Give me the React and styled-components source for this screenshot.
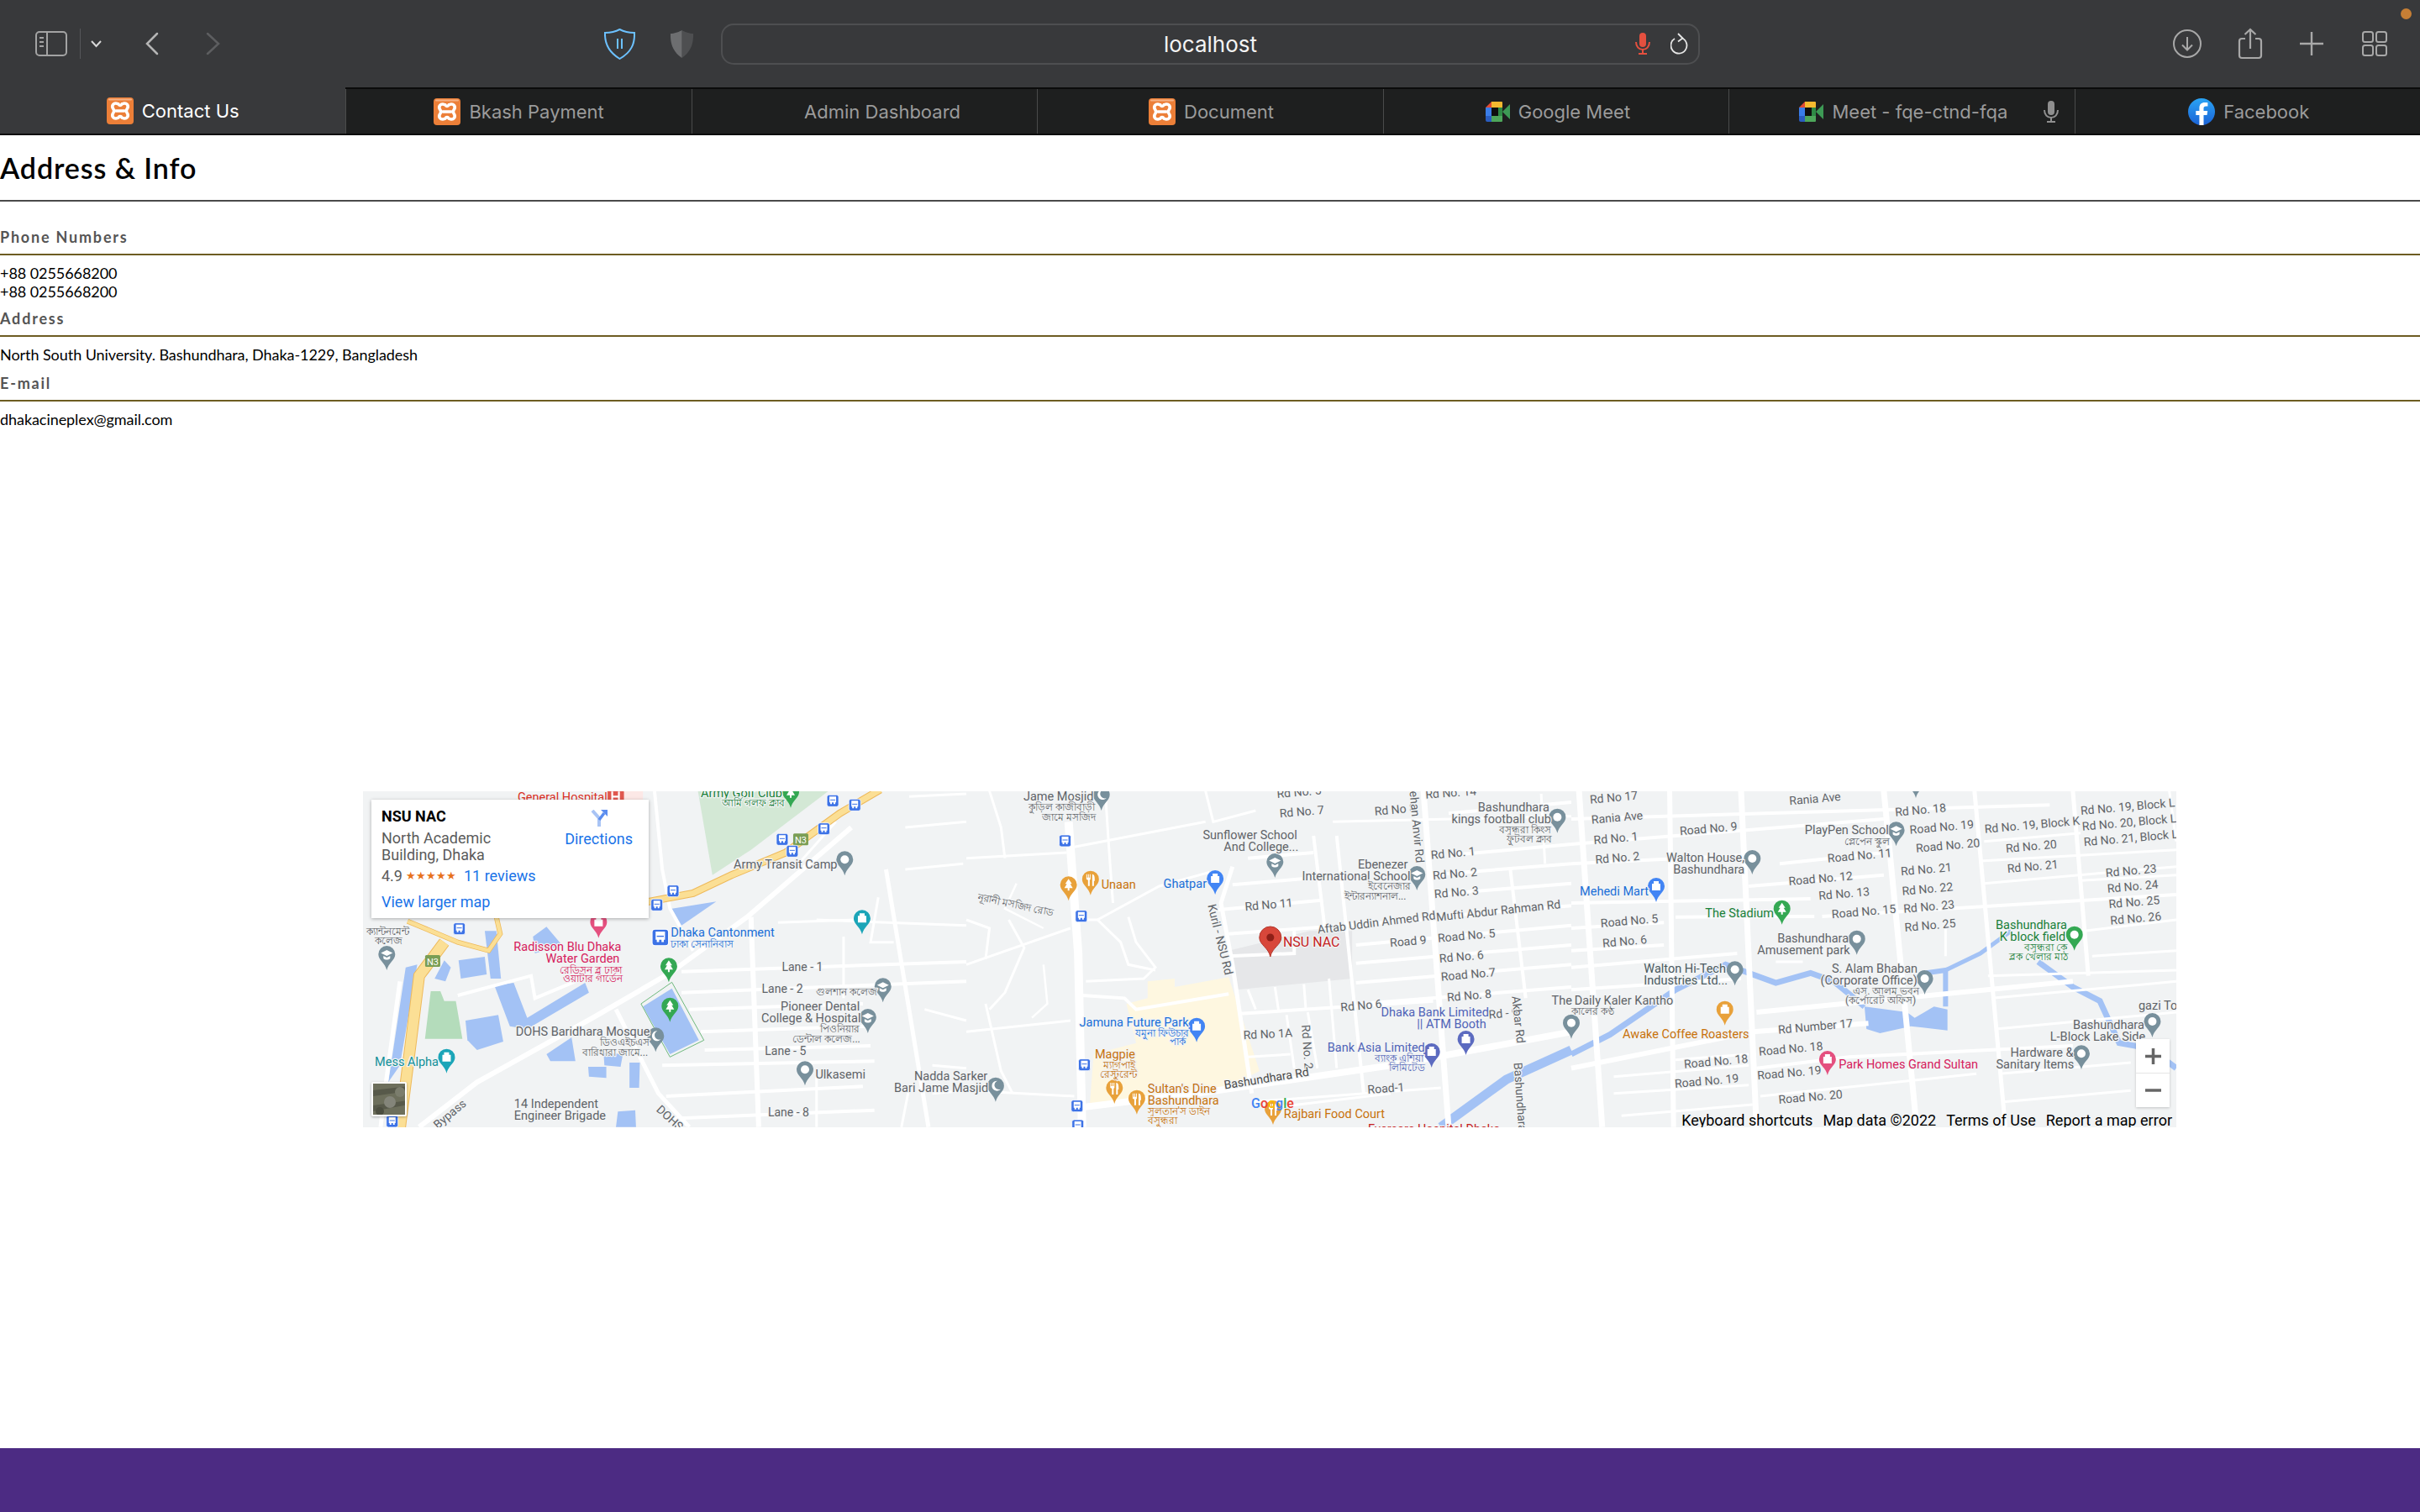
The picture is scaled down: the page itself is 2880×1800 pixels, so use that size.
import styled, { createGlobalStyle } from 'styled-components'

const GlobalStyle = createGlobalStyle`
  html, body { margin: 0; padding: 0; background: #fff; }
  * { box-sizing: border-box; }
`

const Page = styled.div`
  display: flex;
  flex-direction: column;
  height: 1800px;
  overflow: hidden;
  font-family: Lato, "Liberation Sans", sans-serif;
`

/* ---------- browser chrome ---------- */

const Toolbar = styled.div`
  position: relative;
  display: flex;
  align-items: center;
  flex: none;
  height: 104px;
  background: #38393b;
`

const Slot = styled.div`
  display: flex;
  align-items: center;
  flex: none;
  margin-left: ${({ $ml }) => $ml}px;
  width: ${({ $w }) => $w}px;
`

const AddressBar = styled.div`
  display: grid;
  grid-template-columns: 1fr auto 1fr;
  align-items: center;
  flex: none;
  margin-left: 33px;
  width: 1165px;
  height: 49px;
  padding: 0 12px 0 12px;
  border: 2px solid #4e4f51;
  border-radius: 15px;
`

const AddressText = styled.span`
  grid-column: 2;
  font-family: Inter, sans-serif;
  font-size: 26px;
  color: #f4f4f4;
`

const AddressIcons = styled.div`
  grid-column: 3;
  justify-self: end;
  display: flex;
  align-items: center;
  gap: 24px;
`

const RecordDot = styled.span`
  position: absolute;
  top: 10px;
  left: 2857px;
  width: 13px;
  height: 13px;
  border-radius: 50%;
  background: #c77f35;
`

const TabBar = styled.div`
  display: grid;
  grid-template-columns: repeat(7, 1fr);
  flex: none;
  height: 57px;
  background: #1e1f1f;
  border-top: 2px solid #0b0b0b;
  border-bottom: 2px solid #0b0b0b;
`

const Tab = styled.div`
  position: relative;
  display: flex;
  align-items: center;
  justify-content: center;
  gap: 10px;
  padding-left: ${({ $pl }) => $pl || 0}px;
  font-family: Inter, sans-serif;
  font-size: 22px;
  color: ${({ $active }) => ($active ? '#fff' : '#9b9b9b')};
  background: ${({ $active }) => ($active ? '#38393b' : 'transparent')};
  border-left: 1px solid #4a4b4b;
  margin-top: ${({ $active }) => ($active ? '-2px' : '0')};

  &:first-child { border-left: none; }
`

const NoIcon = styled.span`
  width: 32px;
  height: 32px;
`

const TabMic = styled.span`
  position: absolute;
  right: 19px;
  top: 14px;
  display: flex;
`

const Xampp = () => (
  <svg width="32" height="32" viewBox="0 0 32 32">
    <rect width="32" height="32" rx="4" fill="#ec7f38" />
    <rect x="2" y="1.500" width="28" height="2" rx="1" fill="#f5b184" />
    <path d="M14 8C8 5 5 10 8 14c1 1.500 1 2.500 0 4-3 4 0 9 6 6M18 8c6-3 9 2 6 6-1 1.500-1 2.500 0 4 3 4 0 9-6 6M14 8c1 2 3 2 4 0M14 24c1-2 3-2 4 0M11 16h10" fill="none" stroke="#fff" strokeWidth="3.600" strokeLinecap="round" />
  </svg>
)

const MeetIcon = () => (
  <svg width="29" height="24" viewBox="0 0 29 24">
    <path d="M7 0h12a1 1 0 0 1 1 1v6H7z" fill="#f5b92f" />
    <path d="M7 0v7H0z" fill="#df4a33" />
    <path d="M0 7h7v10H0z" fill="#3a7de8" />
    <path d="M0 17h7v7H2a2 2 0 0 1-2-2z" fill="#2a5dc0" />
    <path d="M7 17h13v6a1 1 0 0 1-1 1H7z" fill="#4ea75b" />
    <path d="M15 7h5v10h-5z" fill="#2f8a45" />
    <path d="M20 12l9-9v18z" fill="#3d9a55" />
    <path d="M7 7h8v10H7z" fill="#0f0f0f" />
  </svg>
)

const FacebookIcon = () => (
  <svg width="32" height="32" viewBox="0 0 32 32">
    <defs>
      <linearGradient id="fb" x1="0" y1="0" x2="0" y2="1">
        <stop offset="0" stopColor="#2aa4f4" />
        <stop offset="1" stopColor="#1a62d6" />
      </linearGradient>
    </defs>
    <circle cx="16" cy="16" r="16" fill="url(#fb)" />
    <path d="M18.500 32V20h4l.7-5h-4.700v-3c0-1.500.7-2.600 2.800-2.600h2.100V5.200c-1-.2-2.400-.3-3.800-.3-3.600 0-6.200 2.100-6.200 6.500V15H9.300v5h4.100v12z" fill="#fff" />
  </svg>
)

const MicIcon = ({ color, w = 18, h = 26 }) => (
  <svg width={w} height={h} viewBox="0 0 18 26" fill="none">
    <rect x="5" y="0" width="8" height="17" rx="4" fill={color} />
    <path d="M1 11c0 5.500 3.500 9 8 9s8-3.500 8-9M9 20v5M4 25h10" stroke={color} strokeWidth="2" />
  </svg>
)

const tabs = [
  { title: 'Contact Us', icon: <Xampp />, active: true },
  { title: 'Bkash Payment', icon: <Xampp /> },
  { title: 'Admin Dashboard', icon: <NoIcon /> },
  { title: 'Document', icon: <Xampp />, pl: 2 },
  { title: 'Google Meet', icon: <MeetIcon />, pl: 4 },
  { title: 'Meet - fqe-ctnd-fqa', icon: <MeetIcon />, mic: true, pl: 4 },
  { title: 'Facebook', icon: <FacebookIcon />, pl: 3 },
]

/* ---------- address & info ---------- */

const Info = styled.section`
  flex: none;
  color: #000;
`

const Heading = styled.h2`
  margin: 17px 0 0;
  padding-bottom: 16px;
  font-size: 34px;
  line-height: 44px;
  font-weight: 600;
  letter-spacing: 0.900px;
  border-bottom: 2px solid #4a4a4a;
`

const Group = styled.div`
  margin-top: ${({ $mt }) => $mt}px;
`

const GroupTitle = styled.h4`
  margin: 0;
  padding-bottom: 8px;
  font-size: 18px;
  line-height: 24px;
  font-weight: 700;
  letter-spacing: 1.800px;
  color: #555;
  border-bottom: 2px solid #6d5c22;
`

const GroupBody = styled.div`
  margin-top: 10px;
  font-size: 18px;
  line-height: 22px;
  letter-spacing: -0.060px;
`

/* ---------- map ---------- */

const MapFrame = styled.div`
  position: relative;
  flex: none;
  width: 2158px;
  height: 400px;
  margin: 432px 0 0 432px;
  background: #f1f3f4;
  overflow: hidden;
  font-family: Roboto, sans-serif;
`

const MapSvg = styled.svg`
  display: block;
  text {
    font-family: Roboto, "Noto Sans", sans-serif;
    font-size: 14.500px;
    paint-order: stroke;
    stroke: #f1f3f4;
    stroke-width: 2.500px;
    stroke-linejoin: round;
  }
`

const PlaceCard = styled.div`
  position: absolute;
  top: 10px;
  left: 10px;
  display: flex;
  justify-content: space-between;
  width: 330px;
  height: 141px;
  padding: 10px 19px 0 12px;
  background: #fff;
  box-shadow: 0 1px 4px rgba(0, 0, 0, 0.3);
  font-size: 18px;
  line-height: 20px;
  color: #5b5b5b;
`

const PlaceName = styled.div`
  font-weight: 700;
  color: #000;
  margin-bottom: 6px;
`

const PlaceAddress = styled.div`
  width: 170px;
  margin-bottom: 5px;
`

const Rating = styled.div`
  display: flex;
  align-items: center;
  margin-bottom: 11px;
`

const Stars = styled.span`
  margin: 0 9px 0 4px;
  font-size: 13px;
  letter-spacing: 0;
  color: #e7711b;
`

const CardLink = styled.a`
  color: #1a73e8;
`

const DirectionsBox = styled.div`
  display: flex;
  flex-direction: column;
  align-items: center;
  gap: 5px;
  padding-top: 2px;
`

const SatThumb = styled.div`
  position: absolute;
  left: 10px;
  top: 346px;
  width: 42px;
  height: 41px;
  border: 2px solid #fff;
  border-radius: 2px;
  box-shadow: 0 1px 3px rgba(0, 0, 0, 0.3);
  overflow: hidden;
`

const ZoomBox = styled.div`
  position: absolute;
  left: 2110px;
  top: 295px;
  display: flex;
  flex-direction: column;
  width: 40px;
  height: 81px;
  background: #fff;
  box-shadow: 0 1px 3px rgba(0, 0, 0, 0.2);
`

const ZoomButton = styled.div`
  display: flex;
  align-items: center;
  justify-content: center;
  flex: 1;
  & + & { border-top: 1px solid #e6e6e6; }
`

const Attribution = styled.div`
  position: absolute;
  right: 5px;
  bottom: -2px;
  display: flex;
  gap: 12px;
  font-size: 18px;
  line-height: 21px;
  color: #000;
  white-space: nowrap;
`

const GoogleMark = styled.div`
  position: absolute;
  left: 1057px;
  top: 362px;
  font-size: 16px;
  line-height: 20px;
  font-weight: 500;
`

const Letter = styled.span`
  color: ${({ $c }) => $c};
`

const Footer = styled.footer`
  flex: none;
  height: 76px;
  margin-top: auto;
  background: #4c2b83;
`

// the zoomed crops were read at 1568 wide and 3x high, this puts them back in map pixels
const offsets = { 5: -2, 6: 718, 7: 1438 }
const toMap = (p, x, y) => [x / 2.178 + offsets[p], y / 3 - 7]
const pts = (p, list) => list.map(([x, y]) => toMap(p, x, y).join(',')).join(' ')

const grey = '#5f6368'
const blue = '#1a6fd8'
const red = '#d6205c'
const orange = '#c8720a'
const green = '#188038'
const indigo = '#4f63b8'
const teal = '#129099'

const waters = [
  [5, [[805, 440], [920, 415], [830, 500]]],
  [5, [[730, 790], [805, 725], [875, 910], [800, 960]]],
  [5, [[270, 840], [355, 820], [368, 915], [300, 945], [275, 910]]],
  [5, [[252, 625], [320, 612], [325, 675], [258, 690]]],
  [5, [[345, 715], [395, 705], [430, 830], [580, 705], [590, 740], [430, 870], [385, 860]]],
  [5, [[445, 540], [480, 505], [520, 570], [450, 600]]],
  [5, [[190, 690], [215, 625], [232, 650], [218, 700]]],
  [5, [[480, 960], [545, 900], [555, 985], [490, 985]]],
  [5, [[628, 955], [678, 960], [672, 1005], [630, 1000]]],
  [5, [[588, 1005], [635, 1005], [635, 1045], [590, 1040]]],
  [5, [[695, 990], [722, 990], [720, 1080], [695, 1080]]],
  [5, [[665, 1165], [710, 1160], [712, 1220], [660, 1220]]],
  [5, [[115, 650], [145, 640], [100, 1000], [70, 1060]]],
  [5, [[320, 520], [350, 520], [362, 690], [335, 690]]],
  [7, [[760, 790], [870, 810], [890, 830], [940, 790], [975, 800], [975, 875], [880, 860], [800, 885], [765, 870]]],
]

const canals = [
  [6, [[1568, 945], [1400, 1050], [1230, 1220]], 11],
  [7, [[0, 960], [100, 890], [270, 730], [400, 640], [470, 675], [530, 705], [620, 670], [680, 700], [760, 790]], 7],
  [7, [[920, 670], [970, 660], [970, 790]], 6],
  [7, [[970, 660], [1060, 600], [1140, 520]], 5],
  [7, [[1210, 630], [1300, 720], [1370, 770], [1390, 830], [1420, 920], [1500, 940], [1568, 1010]], 7],
]

const roads = [
  [5, [[1270, 150], [1000, 470], [800, 670], [600, 830], [300, 1060], [150, 1220]], 6],
  [5, [[760, 20], [780, 300], [800, 440], [860, 590]], 4],
  [5, [[1010, 470], [1030, 1220]], 6],
  [5, [[1360, 300], [1470, 1220]], 5],
  [5, [[830, 665], [1568, 630]], 4],
  [5, [[830, 740], [1568, 700]], 4],
  [5, [[850, 800], [1300, 780]], 4],
  [5, [[880, 880], [1310, 860]], 4],
  [5, [[890, 945], [1320, 930]], 4],
  [5, [[780, 1000], [1330, 985]], 4],
  [5, [[790, 1110], [1300, 1075]], 4],
  [5, [[800, 1190], [1330, 1160]], 4],
  [5, [[660, 800], [770, 1100], [850, 1220]], 5],
  [5, [[100, 700], [60, 1100], [50, 1220]], 5],
  [5, [[250, 750], [440, 680], [450, 760], [590, 680]], 4],
  [5, [[1180, 480], [1568, 500]], 3],
  [5, [[1120, 300], [1230, 130]], 3],
  [5, [[1410, 150], [1568, 130]], 3],
  [5, [[1420, 40], [1568, 30]], 3],
  [5, [[1410, 300], [1560, 280]], 3],
  [5, [[1460, 800], [1568, 840]], 3],
  [5, [[1340, 400], [1320, 560], [1380, 560]], 3],
  [5, [[1080, 490], [1280, 480]], 3],
  [5, [[1250, 540], [1250, 760]], 3],
  [5, [[1480, 1000], [1568, 1010]], 3],
  [5, [[1480, 1100], [1568, 1090]], 3],
  [5, [[1180, 1040], [1180, 1220]], 3],
  [5, [[1420, 1080], [1400, 1220]], 3],
  [6, [[265, 130], [290, 600], [300, 1220]], 10],
  [6, [[300, 1150], [650, 1090], [1100, 1000], [1568, 880]], 8],
  [6, [[690, 290], [660, 420], [690, 640], [740, 1100]], 5],
  [6, [[900, 180], [930, 520]], 4],
  [6, [[960, 180], [1030, 1100]], 4],
  [6, [[1185, 20], [1250, 1220]], 7],
  [6, [[1410, 300], [1450, 760]], 4],
  [6, [[1490, 30], [1500, 280]], 3],
  [6, [[620, 20], [640, 130], [750, 90]], 3],
  [6, [[280, 220], [620, 130]], 3],
  [6, [[730, 260], [900, 240]], 4],
  [6, [[690, 355], [900, 330]], 4],
  [6, [[650, 445], [920, 410]], 4],
  [6, [[680, 530], [1180, 480]], 4],
  [6, [[680, 610], [850, 600], [850, 520]], 4],
  [6, [[710, 815], [1210, 770]], 4],
  [6, [[730, 970], [840, 960]], 3],
  [6, [[340, 480], [500, 360], [630, 310]], 3],
  [6, [[300, 480], [340, 480], [400, 560], [420, 640], [490, 660]], 3],
  [6, [[0, 640], [270, 510]], 3],
  [6, [[0, 260], [260, 240]], 3],
  [6, [[300, 750], [410, 760], [440, 800], [680, 745]], 4],
  [6, [[0, 1090], [280, 1110]], 3],
  [6, [[740, 1130], [1230, 1080]], 3],
  [6, [[940, 690], [960, 1010]], 3],
  [6, [[800, 1150], [1100, 1100]], 3],
  [6, [[60, 20], [90, 150], [100, 260]], 3],
  [6, [[110, 480], [150, 580], [100, 740], [60, 800]], 3],
  [6, [[0, 480], [60, 510], [50, 620]], 3],
  [6, [[420, 470], [440, 560], [490, 650], [460, 690], [310, 700]], 3],
  [6, [[360, 20], [370, 230], [380, 420]], 3],
  [6, [[130, 350], [100, 440], [200, 510]], 2.500],
  [6, [[0, 880], [270, 840]], 3],
  [6, [[50, 780], [90, 1020], [120, 1100]], 3],
  [6, [[200, 640], [210, 780], [170, 830]], 2.500],
  [6, [[730, 730], [750, 800]], 3],
  [6, [[800, 720], [810, 810]], 3],
  [6, [[875, 710], [880, 800]], 3],
  [6, [[830, 820], [850, 1010]], 3],
  [6, [[885, 810], [910, 1010]], 3],
  [6, [[1250, 250], [1568, 210]], 4],
  [6, [[1200, 320], [1568, 280]], 4],
  [6, [[1210, 390], [1568, 350]], 4],
  [6, [[1210, 470], [1568, 430]], 4],
  [6, [[1010, 570], [1568, 500]], 4],
  [6, [[1010, 635], [1568, 570]], 4],
  [6, [[1010, 705], [1568, 640]], 4],
  [6, [[1020, 780], [1568, 720]], 4],
  [6, [[1250, 100], [1568, 60]], 4],
  [6, [[950, 130], [1568, 110]], 3],
  [7, [[20, 20], [80, 1220]], 7],
  [7, [[255, 20], [265, 1220]], 6],
  [7, [[440, 20], [480, 1220]], 7],
  [7, [[810, 20], [895, 1220]], 7],
  [7, [[1045, 20], [1125, 1220]], 5],
  [7, [[1300, 20], [1340, 680]], 5],
  [7, [[1550, 20], [1568, 200]], 3],
  [7, [[0, 120], [1240, 70]], 4],
  [7, [[0, 210], [810, 120]], 4],
  [7, [[0, 280], [440, 250]], 4],
  [7, [[540, 280], [810, 240]], 4],
  [7, [[460, 360], [810, 320]], 4],
  [7, [[0, 420], [620, 405]], 4],
  [7, [[0, 510], [240, 490]], 4],
  [7, [[270, 470], [630, 468]], 4],
  [7, [[650, 468], [1568, 390]], 4],
  [7, [[0, 590], [240, 570]], 4],
  [7, [[0, 650], [430, 600]], 4],
  [7, [[0, 730], [440, 690]], 4],
  [7, [[480, 810], [1300, 700]], 6],
  [7, [[0, 1010], [470, 880], [770, 850]], 6],
  [7, [[270, 980], [460, 960]], 3],
  [7, [[110, 1040], [460, 1000]], 3],
  [7, [[110, 1100], [460, 1070]], 3],
  [7, [[130, 1180], [470, 1140]], 3],
  [7, [[480, 1010], [720, 970], [1300, 930]], 4],
  [7, [[490, 1110], [1050, 1030]], 3],
  [7, [[1070, 200], [1320, 170]], 3],
  [7, [[1060, 270], [1568, 230]], 3],
  [7, [[1070, 350], [1568, 290]], 3],
  [7, [[1320, 340], [1568, 320]], 3],
  [7, [[1330, 520], [1568, 480]], 3],
  [7, [[1350, 610], [1568, 590]], 3],
  [7, [[1080, 680], [1568, 660]], 3],
  [7, [[1090, 760], [1568, 700]], 3],
  [7, [[1100, 870], [1568, 810]], 3],
  [7, [[1110, 1030], [1450, 990]], 3],
  [7, [[1120, 1130], [1450, 1090]], 3],
  [7, [[970, 510], [970, 610]], 3],
  [7, [[530, 630], [600, 630]], 3],
]

const labels = [
  [5, 'General Hospital', 405, 42, '#d93025'],
  [5, 'Army Golf Club', 880, 27, green],
  [5, 'আর্মি গলফ ক্লাব', 935, 60, green, 12],
  [5, 'Army Transit Camp', 965, 283, grey],
  [5, 'Dhaka Cantonment', 802, 524, blue],
  [5, 'ঢাকা সেনানিবাস', 802, 564, blue, 12],
  [5, 'Radisson Blu Dhaka', 395, 576, red],
  [5, 'Water Garden', 478, 618, red],
  [5, 'রেডিসন ব্লু ঢাকা', 515, 656, red, 12],
  [5, 'ওয়াটার গার্ডেন', 523, 688, red, 12],
  [5, 'ক্যান্টনমেন্ট', 12, 518, grey, 12],
  [5, 'কলেজ', 34, 552, grey, 12],
  [5, 'Lane - 1', 1090, 648, grey, 14],
  [5, 'Lane - 2', 1038, 725, grey, 14],
  [5, 'গুলশান কলেজ', 1178, 735, grey, 12],
  [5, 'Pioneer Dental', 1087, 790, grey],
  [5, 'College & Hospital', 1037, 832, grey],
  [5, 'পিওনিয়ার', 1190, 868, grey, 12],
  [5, 'ডেন্টাল কলেজ...', 1118, 902, grey, 12],
  [5, 'DOHS Baridhara Mosque', 400, 880, grey],
  [5, 'ডিওএইচএস', 618, 915, grey, 12],
  [5, 'বারিধারা জামে...', 572, 950, grey, 12],
  [5, 'Lane - 5', 1046, 948, grey, 14],
  [5, 'Mess Alpha', 35, 988, teal],
  [5, 'Ulkasemi', 1177, 1033, grey],
  [5, 'Nadda Sarker', 1433, 1037, grey],
  [5, 'Bari Jame Masjid', 1381, 1079, grey],
  [5, '14 Independent', 396, 1136, grey],
  [5, 'Engineer Brigade', 396, 1178, grey],
  [5, 'Lane - 8', 1054, 1167, grey, 14],
  [5, 'Dhaka Bypass', 120, 1299, grey, 14, -40],
  [5, 'DOHS Rd', 770, 1150, grey, 14, 42],
  [6, 'Jame Mosjid', 148, 40, grey],
  [6, 'কুড়িল কাজীবাড়ী', 162, 76, grey, 12],
  [6, 'জামে মসজিদ', 195, 110, grey, 12],
  [6, 'Rd No. 5', 805, 30, grey, 14, -5],
  [6, 'Rd No. 7', 812, 100, grey, 14, -5],
  [6, 'Rd No 8', 1058, 92, grey, 14, -5],
  [6, 'Rd No. 14', 1190, 32, grey, 14, -4],
  [6, 'Bashundhara', 1326, 78, grey],
  [6, 'kings football club', 1258, 120, grey],
  [6, 'বসুন্ধরা কিংস', 1380, 156, grey, 12],
  [6, 'ফুটবল ক্লাব', 1400, 190, grey, 12],
  [6, 'Sunflower School', 613, 178, grey],
  [6, 'And College...', 667, 220, grey],
  [6, 'Rd No. 1', 1204, 248, grey, 14, -5],
  [6, 'Ebenezer', 1015, 282, grey],
  [6, 'International School', 870, 323, grey],
  [6, 'ইবেনেজার', 1040, 358, grey, 12],
  [6, 'ইন্টারন্যাশনাল...', 980, 392, grey, 12],
  [6, 'Rd No. 2', 1209, 322, grey, 14, -5],
  [6, 'Rd No. 3', 1213, 388, grey, 14, -5],
  [6, 'Unaan', 350, 353, orange],
  [6, 'Ghatpar', 511, 350, blue],
  [6, 'নূরানী মসজিদ রোড', 30, 395, grey, 12, 12],
  [6, 'Rd No 11', 722, 433, grey, 14, -5],
  [6, 'Mufti Abdur Rahman Rd', 1218, 470, grey, 14, -6],
  [6, 'Aftab Uddin Ahmed Rd', 910, 515, grey, 14, -7],
  [6, 'Road 9', 1098, 562, grey, 14, -5],
  [6, 'Road No. 5', 1222, 545, grey, 14, -5],
  [6, 'Rd No. 6', 1226, 618, grey, 14, -5],
  [6, 'Road No.7', 1230, 683, grey, 14, -5],
  [6, 'Rd No. 8', 1246, 757, grey, 14, -5],
  [6, 'Rd No 6', 970, 792, grey, 14, -5],
  [6, 'Rd - 9', 1354, 818, grey, 14, -5],
  [6, 'Kuril - NSU Rd', 636, 425, grey, 14, 76],
  [6, 'Akbar Rd', 1425, 752, grey, 14, 84],
  [6, 'Rd No. 2', 880, 855, grey, 14, 86],
  [6, 'Bashundhara Rd', 1430, 990, grey, 14, 86],
  [6, 'ehan Anvir Rd', 1160, 20, grey, 14, 85],
  [6, 'Rd No 1A', 718, 892, grey, 14, -3],
  [6, 'NSU NAC', 821, 560, '#c5221f', 16],
  [6, 'Dhaka Bank Limited', 1075, 810, indigo],
  [6, '|| ATM Booth', 1168, 852, indigo],
  [6, 'Bank Asia Limited', 936, 936, indigo],
  [6, 'ব্যাংক এশিয়া', 1058, 972, indigo, 12],
  [6, 'লিমিটেড', 1095, 1005, indigo, 12],
  [6, 'Jamuna Future Park', 293, 846, blue],
  [6, 'যমুনা ফিউচার', 438, 882, blue, 12],
  [6, 'পার্ক', 528, 912, blue, 12],
  [6, 'Magpie', 333, 960, orange],
  [6, 'ম্যাগপাই', 355, 996, orange, 12],
  [6, 'রেস্টুরেন্ট', 347, 1030, orange, 12],
  [6, "Sultan's Dine", 470, 1082, orange],
  [6, 'Bashundhara', 470, 1124, orange],
  [6, 'সুলতান\'স ডাইন', 470, 1160, orange, 12],
  [6, 'বসুন্ধরা', 470, 1194, orange, 12],
  [6, 'Bashundhara Rd', 668, 1070, '#4a4a4a', 14, -9],
  [6, 'Road-1', 1040, 1086, grey, 14, -4],
  [6, 'Rajbari Food Court', 823, 1174, orange],
  [6, 'Evercare Hospital Dhaka', 1041, 1227, '#c5221f'],
  [7, 'Rd No 17', 48, 50, grey, 14, -5],
  [7, 'Rania Ave', 52, 122, grey, 14, -5],
  [7, 'Rania Ave', 565, 55, grey, 14, -5],
  [7, 'Rd No. 1', 58, 195, grey, 14, -5],
  [7, 'Rd No. 2', 62, 265, grey, 14, -5],
  [7, 'Road No. 9', 281, 163, grey, 14, -5],
  [7, 'Rd No. 18', 839, 95, grey, 14, -5],
  [7, 'PlayPen School', 605, 160, grey],
  [7, 'প্লেপেন স্কুল', 708, 198, grey, 12],
  [7, 'Road No. 19', 877, 158, grey, 14, -5],
  [7, 'Rd No. 19, Block K', 1071, 155, grey, 14, -5],
  [7, 'Rd No. 19, Block L', 1320, 90, grey, 14, -5],
  [7, 'Rd No. 20, Block L', 1324, 146, grey, 14, -5],
  [7, 'Rd No. 21, Block L', 1328, 202, grey, 14, -5],
  [7, 'Road No. 20', 893, 224, grey, 14, -5],
  [7, 'Rd No. 20', 1126, 225, grey, 14, -5],
  [7, 'Rd No. 21', 1130, 297, grey, 14, -5],
  [7, 'Walton House,', 246, 258, grey],
  [7, 'Bashundhara', 264, 300, grey],
  [7, 'Road No. 11', 664, 260, grey, 14, -5],
  [7, 'Rd No. 21', 854, 307, grey, 14, -5],
  [7, 'Rd No. 23', 1385, 312, grey, 14, -5],
  [7, 'Rd No. 24', 1389, 368, grey, 14, -5],
  [7, 'Rd No. 25', 1393, 424, grey, 14, -5],
  [7, 'Rd No. 26', 1397, 482, grey, 14, -5],
  [7, 'Road No. 12', 563, 342, grey, 14, -5],
  [7, 'Mehedi Mart', 22, 378, blue],
  [7, 'Rd No. 13', 641, 394, grey, 14, -5],
  [7, 'Rd No. 22', 857, 377, grey, 14, -5],
  [7, 'The Stadium', 347, 457, green],
  [7, 'Road No. 15', 675, 460, grey, 14, -5],
  [7, 'Rd No. 23', 861, 440, grey, 14, -5],
  [7, 'Road No. 5', 76, 492, grey, 14, -5],
  [7, 'Rd No. 25', 864, 507, grey, 14, -5],
  [7, 'Bashundhara', 1100, 497, green],
  [7, 'K block field', 1110, 539, green],
  [7, 'বসুন্ধরা কে', 1175, 576, green, 12],
  [7, 'ব্লক খেলার মাঠ', 1135, 610, green, 12],
  [7, 'Bashundhara', 534, 545, grey],
  [7, 'Amusement park', 482, 587, grey],
  [7, 'Rd No. 6', 81, 563, grey, 14, -5],
  [7, 'Walton Hi-Tech', 188, 653, '#4a5a60'],
  [7, 'Industries Ltd...', 188, 695, '#4a5a60'],
  [7, 'S. Alam Bhaban', 675, 653, grey],
  [7, '(Corporate Office)', 646, 695, grey],
  [7, 'এস. আলম ভবন', 730, 732, grey, 12],
  [7, '(কর্পোরেট অফিস)', 710, 766, grey, 12],
  [7, 'Daily Kaler Kantho', 8, 769, grey],
  [7, 'কালের কণ্ঠ', 0, 805, grey, 12],
  [7, 'gazi To', 1470, 785, grey],
  [7, 'Bashundhara', 1300, 856, grey],
  [7, 'L-Block Lake Side', 1241, 898, grey],
  [7, 'Rd Number 17', 536, 872, grey, 14, -5],
  [7, 'Awake Coffee Roasters', 133, 889, orange],
  [7, 'Road No. 18', 486, 950, grey, 14, -5],
  [7, 'Road No. 18', 292, 995, grey, 14, -5],
  [7, 'Hardware &', 1138, 953, grey],
  [7, 'Sanitary Items', 1101, 995, grey],
  [7, 'Park Homes Grand Sultan', 693, 995, red],
  [7, 'Road No. 19', 482, 1036, grey, 14, -5],
  [7, 'Road No. 19', 268, 1065, grey, 14, -5],
  [7, 'Road No. 20', 537, 1122, grey, 14, -5],
  [6, 'The', 1517, 768, grey],
]

const pinGrey = '#78909c'
const pinBlue = '#4285f4'
const pinOrange = '#e8a13a'
const pinGreen = '#34a853'
const pinIndigo = '#5c6bc0'
const pinPink = '#e4507f'
const pinTeal = '#1ba5b8'

const pins = [
  [5, 1253, 322, pinGrey, 'dot'], [5, 1298, 532, pinTeal, 'box'], [5, 797, 703, pinGreen, 'tree'],
  [5, 800, 845, pinGreen, 'tree'], [5, 66, 660, pinGrey, 'hat'], [5, 1352, 775, pinGrey, 'hat'],
  [5, 1313, 885, pinGrey, 'hat'], [5, 763, 952, pinGrey, 'moon'], [5, 1150, 1072, pinGrey, 'dot'],
  [5, 221, 1028, pinTeal, 'box'], [5, 615, 545, pinPink, 'box'], [5, 1113, 80, pinGreen, 'tree'],
  [6, 350, 90, pinGrey, 'moon'], [6, 265, 412, pinOrange, 'tree'], [6, 322, 392, pinOrange, 'fork'],
  [6, 645, 390, pinBlue, 'box'], [6, 800, 330, pinGrey, 'hat'], [6, 1168, 375, pinGrey, 'hat'],
  [6, 1532, 170, pinGrey, 'dot'], [6, 597, 917, pinBlue, 'box'], [6, 384, 1137, pinOrange, 'fork'],
  [6, 442, 1175, pinOrange, 'fork'], [6, 795, 1212, pinOrange, 'fork'], [6, 1295, 963, pinIndigo, 'box'],
  [6, 1206, 1008, pinIndigo, 'box'], [6, 76, 1130, pinGrey, 'moon'], [7, 0, 905, pinGrey, 'dot'],
  [7, 893, 45, pinGrey, 'dot'], [7, 842, 217, pinGrey, 'hat'], [7, 469, 318, pinGrey, 'dot'],
  [7, 220, 417, pinBlue, 'box'], [7, 546, 497, pinGreen, 'tree'], [7, 740, 605, pinGrey, 'dot'],
  [7, 424, 715, pinGrey, 'dot'], [7, 916, 747, pinGrey, 'dot'], [7, 1304, 590, pinGreen, 'dot'],
  [7, 398, 857, pinOrange, 'box'], [7, 664, 1035, pinPink, 'box'], [7, 1322, 1015, pinGrey, 'dot'],
  [7, 1506, 900, pinGrey, 'dot'],
]

const busStops = [
  [5, 1222, 55], [5, 1279, 70], [5, 1199, 155], [5, 1091, 193], [5, 1117, 235], [5, 808, 377],
  [5, 766, 427], [5, 254, 512], [5, 80, 1200], [6, 256, 198], [6, 298, 467], [6, 306, 998],
  [6, 287, 1145], [6, 289, 1215],
]

const PinGlyph = ({ kind }) => {
  if (kind === 'hat') return <path d="M0-24l7 3.500-7 3.500-7-3.500zM-4-17v3c2 2 6 2 8 0v-3l-4 2z" fill="#fff" />
  if (kind === 'moon') return <path d="M2-25a6 6 0 1 0 4 10 5 5 0 1 1-4-10z" fill="#fff" />
  if (kind === 'tree') return <path d="M0-26l4 6h-2l3 5H1v3h-2v-3h-4l3-5h-2z" fill="#fff" />
  if (kind === 'fork') return <path d="M-5-25h1v4h1v-4h1v4h1v-4h1v6l-1 1v7h-2v-7l-2-1zM2-25c3 0 3 4 3 8h-1v6H2z" fill="#fff" />
  if (kind === 'box') return <path d="M-5-22h10v8H-5zM-3-25h6v3h-6z" fill="#fff" />
  return <circle cx="0" cy="-19" r="5" fill="#fff" />
}

const Pin = ({ x, y, color, kind }) => (
  <g transform={`translate(${x} ${y})`}>
    <path d="M0 0C-2-9-10-12-10-19a10 10 0 1 1 20 0C10-12 2-9 0 0z" fill={color} />
    <PinGlyph kind={kind} />
  </g>
)

const BusStop = ({ x, y, scale = 1 }) => (
  <g transform={`translate(${x} ${y}) scale(${scale})`}>
    <rect x="-7" y="-7" width="14" height="14" rx="2.500" fill="#3c72e6" stroke="#fff" strokeWidth="0.800" />
    <path d="M-4-5h8v7h-8zM-3 2h2v2h-2zM1 2h2v2H1z" fill="#fff" />
    <path d="M-3-1h6" stroke="#3c72e6" />
  </g>
)

const Shield = ({ x, y }) => (
  <g>
    <rect x={x - 9} y={y - 7} width="18" height="14" rx="1.500" fill="#7a9e55" />
    <text x={x} y={y + 4.500} textAnchor="middle" style={{ fontSize: '11px', fill: '#fff', stroke: 'none' }}>N3</text>
  </g>
)

const MapDrawing = () => {
  const [nx, ny] = toMap(6, 788, 612)
  const [bx, by] = toMap(5, 775, 543)
  const [s1x, s1y] = toMap(5, 1139, 193)
  const [s2x, s2y] = toMap(5, 185, 627)
  const [hx, hy] = toMap(5, 659, 40)
  return (
    <MapSvg width="2158" height="400" viewBox="0 0 2158 400">
      <polygon points={pts(5, [[870, 0], [1230, 0], [1010, 230], [910, 320]])} fill="#d3e8d5" />
      <polygon points={pts(5, [[180, 735], [205, 735], [215, 770], [245, 770], [262, 905], [165, 905]])} fill="#b4dcbb" />
      <polygon points={pts(5, [[640, 20], [730, 20], [730, 55], [640, 55]])} fill="#fce8e6" />
      <polygon points={pts(6, [[470, 700], [540, 690], [540, 720], [680, 685], [760, 1020], [660, 1090], [320, 1140], [330, 960], [440, 920], [415, 780], [470, 760]])} fill="#fef7e0" />
      <polygon points={pts(6, [[680, 590], [890, 520], [1000, 520], [1000, 690], [700, 730]])} fill="#e6e7e9" />
      {waters.map(([p, list], i) => <polygon key={i} points={pts(p, list)} fill="#a3c2f5" />)}
      {canals.map(([p, list, w], i) => <polyline key={i} points={pts(p, list)} fill="none" stroke="#a3c2f5" strokeWidth={w} />)}
      {roads.map(([p, list, w], i) => <polyline key={i} points={pts(p, list)} fill="none" stroke="#fff" strokeWidth={w} />)}
      <polygon points={pts(5, [[725, 780], [805, 703], [888, 910], [800, 970]])} fill="none" stroke="#6fb97d" strokeWidth="1" />
      <g fill="none" stroke="#eeb95a" strokeWidth="9">
        <polyline points={pts(5, [[1345, 15], [1240, 100], [1100, 240], [960, 320], [860, 385], [745, 415], [500, 430]])} />
        <polyline points={pts(5, [[215, 560], [150, 680], [130, 900], [100, 1225]])} strokeWidth="14" />
        <polyline points={pts(5, [[120, 485], [250, 560], [330, 590], [360, 530], [350, 470]])} strokeWidth="6" />
      </g>
      <g fill="none" stroke="#fbdf95" strokeWidth="7">
        <polyline points={pts(5, [[1345, 15], [1240, 100], [1100, 240], [960, 320], [860, 385], [745, 415], [500, 430]])} />
        <polyline points={pts(5, [[215, 560], [150, 680], [130, 900], [100, 1225]])} strokeWidth="12" />
        <polyline points={pts(5, [[120, 485], [250, 560], [330, 590], [360, 530], [350, 470]])} strokeWidth="4.500" />
      </g>
      <g transform={`translate(${hx} ${hy})`}>
        <rect x="-10" y="-10" width="20" height="20" rx="5" fill="#e0584f" />
        <path d="M-4-6v12M4-6V6M-4 0h8" stroke="#fff" strokeWidth="2.200" />
      </g>
      <Shield x={s1x} y={s1y} />
      <Shield x={s2x} y={s2y} />
      {busStops.map(([p, x, y], i) => {
        const [mx, my] = toMap(p, x, y)
        return <BusStop key={i} x={mx} y={my} />
      })}
      <BusStop x={bx} y={by} scale={1.400} />
      {pins.map(([p, x, y, c, k], i) => {
        const [mx, my] = toMap(p, x, y)
        return <Pin key={i} x={mx} y={my} color={c} kind={k} />
      })}
      {labels.map(([p, t, x, y, c, size, r], i) => {
        const [mx, my] = toMap(p, x, y)
        return (
          <text
            key={i}
            x={mx}
            y={my + 5}
            fill={c}
            style={size ? { fontSize: `${size}px` } : undefined}
            transform={r ? `rotate(${r} ${mx} ${my})` : undefined}
          >
            {t}
          </text>
        )
      })}
      <g transform={`translate(${nx} ${ny})`}>
        <path d="M0 0C-2-11-13-14-13-23a13 13 0 1 1 26 0C13-14 2-11 0 0z" fill="#d8473a" stroke="#b3362b" strokeWidth="1" />
        <circle cy="-23" r="4.500" fill="#8e1f17" />
      </g>
    </MapSvg>
  )
}

export default function App() {
  return (
    <Page>
      <GlobalStyle />
      <Toolbar>
        <Slot $ml={42} $w={38}>
          <svg width="38" height="30" viewBox="0 0 38 30" fill="none" stroke="#a3a3a3" strokeWidth="2">
            <rect x="1" y="1" width="36" height="28" rx="4" />
            <path d="M14 1v28M5 8h5M5 13h5M5 18h5" />
          </svg>
        </Slot>
        <Slot $ml={15} $w={1}>
          <svg width="1" height="36"><rect width="1" height="36" fill="#55565a" /></svg>
        </Slot>
        <Slot $ml={12} $w={13}>
          <svg width="13" height="9" viewBox="0 0 13 9" fill="none" stroke="#d8d8d8" strokeWidth="2"><path d="M1 1l5.500 6L12 1" /></svg>
        </Slot>
        <Slot $ml={52} $w={16}>
          <svg width="16" height="28" viewBox="0 0 16 28" fill="none" stroke="#b5b5b5" strokeWidth="2.500" strokeLinecap="round"><path d="M14 2L2 14l12 12" /></svg>
        </Slot>
        <Slot $ml={56} $w={17}>
          <svg width="17" height="28" viewBox="0 0 17 28" fill="none" stroke="#5d5e60" strokeWidth="2.500" strokeLinecap="round"><path d="M2 2l13 12L2 26" /></svg>
        </Slot>
        <Slot $ml={457} $w={37}>
          <svg width="37" height="37" viewBox="0 0 37 37" fill="none" stroke="#6cc1ff" strokeWidth="2">
            <path d="M18.500 1C24 4 30 5 36 5c.5 13-3.500 23-17.500 31C5 28 .5 18 1 5c6 0 12-1 17.500-4z" />
            <path d="M16 12v12M21 12v12" />
          </svg>
        </Slot>
        <Slot $ml={42} $w={27}>
          <svg width="27" height="33" viewBox="0 0 27 33">
            <path d="M13.500 0C17 2 23 4 27 4c.5 12-3 22-13.500 29z" fill="#4e4f51" />
            <path d="M13.500 0C10 2 4 4 0 4c-.5 12 3 22 13.500 29z" fill="#6d6e70" />
          </svg>
        </Slot>
        <AddressBar>
          <AddressText>localhost</AddressText>
          <AddressIcons>
            <MicIcon color="#e5503f" />
            <svg width="21" height="26" viewBox="0 0 21 26" fill="none" stroke="#e6e6e6" strokeWidth="1.800">
              <path d="M14 6.500A9.500 9.500 0 1 1 5 7" />
              <path d="M9 1l5.500 5.500-5.500 4" />
            </svg>
          </AddressIcons>
        </AddressBar>
        <Slot $ml={563} $w={34}>
          <svg width="34" height="34" viewBox="0 0 34 34" fill="none" stroke="#a8a8a8" strokeWidth="2">
            <circle cx="17" cy="17" r="16" />
            <path d="M17 9v15M11 18.500l6 6 6-6" />
          </svg>
        </Slot>
        <Slot $ml={43} $w={30}>
          <svg width="30" height="38" viewBox="0 0 30 38" fill="none" stroke="#a8a8a8" strokeWidth="2.200">
            <path d="M9 13H5a3 3 0 0 0-3 3v17a3 3 0 0 0 3 3h20a3 3 0 0 0 3-3V16a3 3 0 0 0-3-3h-4M15 25V2M8.500 8L15 2l6.500 6" />
          </svg>
        </Slot>
        <Slot $ml={44} $w={28}>
          <svg width="28" height="28" viewBox="0 0 28 28" fill="none" stroke="#a8a8a8" strokeWidth="2.400"><path d="M14 0v28M0 14h28" /></svg>
        </Slot>
        <Slot $ml={46} $w={30}>
          <svg width="30" height="30" viewBox="0 0 30 30" fill="none" stroke="#a8a8a8" strokeWidth="2">
            <rect x="1" y="1" width="12" height="12" rx="2.500" />
            <rect x="17" y="1" width="12" height="12" rx="2.500" />
            <rect x="1" y="17" width="12" height="12" rx="2.500" />
            <rect x="17" y="17" width="12" height="12" rx="2.500" />
          </svg>
        </Slot>
        <RecordDot />
      </Toolbar>

      <TabBar>
        {tabs.map((tab) => (
          <Tab key={tab.title} $active={tab.active} $pl={tab.pl}>
            {tab.icon}
            <span>{tab.title}</span>
            {tab.mic && <TabMic><MicIcon color="#8f8f8f" /></TabMic>}
          </Tab>
        ))}
      </TabBar>

      <Info>
        <Heading>Address &amp; Info</Heading>
        <Group $mt={30}>
          <GroupTitle>Phone Numbers</GroupTitle>
          <GroupBody>+88 0255668200<br />+88 0255668200</GroupBody>
        </Group>
        <Group $mt={9}>
          <GroupTitle>Address</GroupTitle>
          <GroupBody>North South University. Bashundhara, Dhaka-1229, Bangladesh</GroupBody>
        </Group>
        <Group $mt={11}>
          <GroupTitle>E-mail</GroupTitle>
          <GroupBody>dhakacineplex@gmail.com</GroupBody>
        </Group>
      </Info>

      <MapFrame>
        <MapDrawing />
        <PlaceCard>
          <div>
            <PlaceName>NSU NAC</PlaceName>
            <PlaceAddress>North Academic Building, Dhaka</PlaceAddress>
            <Rating>
              4.9
              <Stars>★★★★★</Stars>
              <CardLink>11 reviews</CardLink>
            </Rating>
            <CardLink>View larger map</CardLink>
          </div>
          <DirectionsBox>
            <svg width="20" height="20" viewBox="0 0 20 20" fill="none">
              <path d="M2 1l8 9v10" stroke="#a9c4f5" strokeWidth="4" />
              <path d="M10 12l6-8" stroke="#5b8def" strokeWidth="3.500" />
              <path d="M12 0h8v8z" fill="#5b8def" />
            </svg>
            <CardLink>Directions</CardLink>
          </DirectionsBox>
        </PlaceCard>
        <SatThumb>
          <svg width="42" height="41" viewBox="0 0 42 41">
            <rect width="42" height="41" fill="#6d6f5c" />
            <path d="M0 8l42-5v6L0 15zM0 26l42-6v5L0 33z" fill="#57594a" />
            <circle cx="20" cy="22" r="7" fill="#84857a" />
            <circle cx="8" cy="33" r="5" fill="#4c4e40" />
            <circle cx="32" cy="10" r="6" fill="#7b7d6d" />
          </svg>
        </SatThumb>
        <GoogleMark>
          <Letter $c="#4285f4">G</Letter>
          <Letter $c="#ea4335">o</Letter>
          <Letter $c="#fbbc05">o</Letter>
          <Letter $c="#4285f4">g</Letter>
          <Letter $c="#34a853">l</Letter>
          <Letter $c="#ea4335">e</Letter>
        </GoogleMark>
        <ZoomBox>
          <ZoomButton>
            <svg width="19" height="19" viewBox="0 0 19 19" fill="none" stroke="#666" strokeWidth="3.500"><path d="M9.500 0v19M0 9.500h19" /></svg>
          </ZoomButton>
          <ZoomButton>
            <svg width="19" height="4" viewBox="0 0 19 4" fill="none" stroke="#666" strokeWidth="3.500"><path d="M0 2h19" /></svg>
          </ZoomButton>
        </ZoomBox>
        <Attribution>
          <span>Keyboard shortcuts</span>
          <span>Map data ©2022</span>
          <span>Terms of Use</span>
          <span>Report a map error</span>
        </Attribution>
      </MapFrame>

      <Footer />
    </Page>
  )
}
